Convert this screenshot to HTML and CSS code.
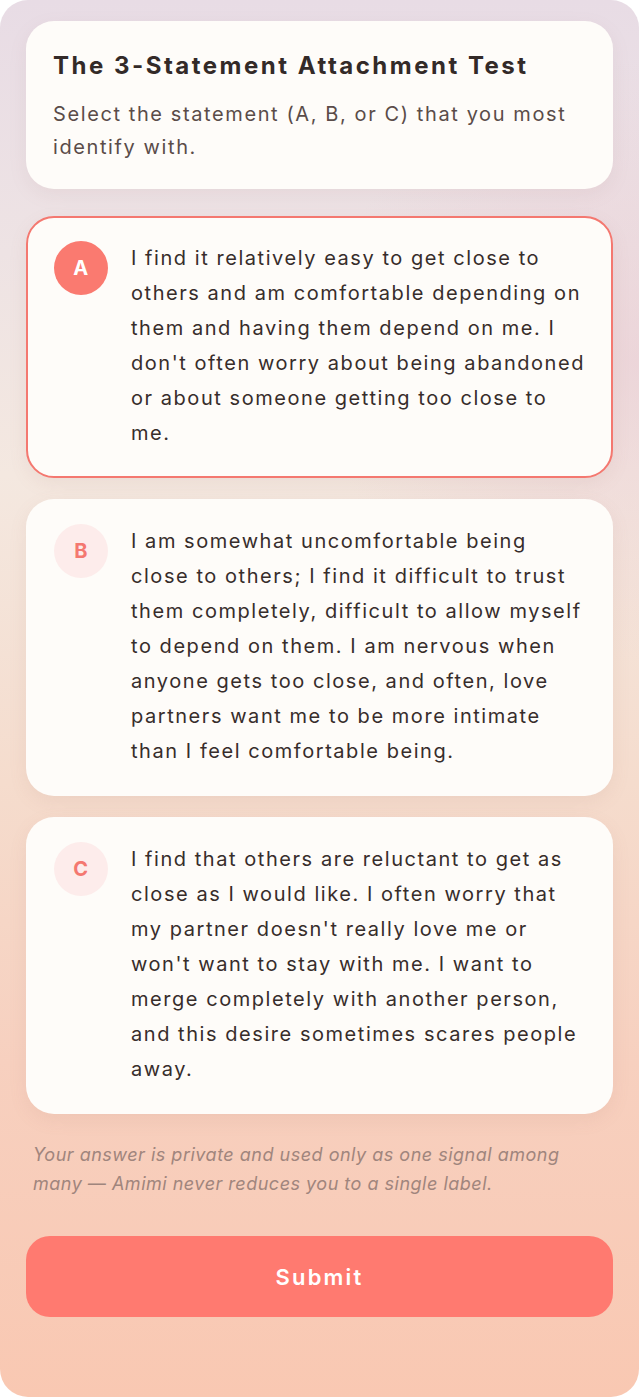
FILE: index.html
```html
<!DOCTYPE html>
<html lang="en">
<head>
<meta charset="utf-8">
<title>The 3-Statement Attachment Test</title>
<link rel="stylesheet" href="styles.css">
</head>
<body>
<main class="screen">
  <section class="intro">
    <h1 class="intro-title">The 3-Statement Attachment Test</h1>
    <p class="intro-text">Select the statement (A, B, or C) that you most identify with.</p>
  </section>

  <div class="options">
    <button class="option is-selected" type="button">
      <span class="badge">A</span>
      <span class="option-text">I find it relatively easy to get close to others and am comfortable depending on them and having them depend on me. I don't often worry about being abandoned or about someone getting too close to me.</span>
    </button>
    <button class="option" type="button">
      <span class="badge">B</span>
      <span class="option-text">I am somewhat uncomfortable being close to others; I find it difficult to trust them completely, difficult to allow myself to depend on them. I am nervous when anyone gets too close, and often, love partners want me to be more intimate than I feel comfortable being.</span>
    </button>
    <button class="option" type="button">
      <span class="badge">C</span>
      <span class="option-text">I find that others are reluctant to get as close as I would like. I often worry that my partner doesn't really love me or won't want to stay with me. I want to merge completely with another person, and this desire sometimes scares people away.</span>
    </button>
  </div>

  <p class="note">Your answer is private and used only as one signal among many — Amimi never reduces you to a single label.</p>

  <button class="submit" type="button">Submit</button>
</main>
</body>
</html>
```

FILE: styles.css
```css
* { box-sizing: border-box; }

html, body {
  margin: 0;
  padding: 0;
  background: #ffffff;
}

body {
  font-family: Inter, "Noto Sans", "Liberation Sans", sans-serif;
  color: #3a302e;
}

.screen {
  width: 639px;
  height: 1397px;
  border-radius: 28px;
  padding: 21px 26px 0 26px;
  display: flex;
  flex-direction: column;
  background:
    radial-gradient(ellipse 320px 300px at 100% 360px, rgba(232, 200, 210, 0.55), rgba(232, 200, 210, 0) 100%),
    linear-gradient(180deg, #e8dce5 0%, #eee3e4 18%, #f4e8e0 34%, #f5dccd 56%, #f7d0bf 76%, #f9c8b2 100%);
  overflow: hidden;
}

.intro {
  background: #fefcf9;
  border-radius: 28px;
  padding: 28px 27px 25px 27px;
  box-shadow: 0 6px 18px rgba(170, 130, 130, 0.10);
}

.intro-title {
  margin: 0;
  font-size: 24px;
  font-weight: 700;
  line-height: 34px;
  letter-spacing: 2.5px;
  color: #332a28;
}

.intro-text {
  margin: 15px 0 0 0;
  font-size: 20px;
  line-height: 33px;
  letter-spacing: 1.6px;
  color: #5a4c49;
}

.options {
  margin-top: 27px;
  display: flex;
  flex-direction: column;
  gap: 21px;
}

.option {
  display: flex;
  align-items: flex-start;
  gap: 23px;
  width: 100%;
  margin: 0;
  padding: 23px 26px 25px 26px;
  background: #fefcf9;
  border: 2px solid transparent;
  border-radius: 28px;
  text-align: left;
  font: inherit;
  color: inherit;
  box-shadow: 0 6px 18px rgba(170, 120, 110, 0.10);
  cursor: pointer;
}

.option.is-selected {
  border-color: #f47870;
}

.badge {
  flex: 0 0 54px;
  width: 54px;
  height: 54px;
  border-radius: 50%;
  display: flex;
  align-items: center;
  justify-content: center;
  background: #fdeceb;
  color: #f47870;
  font-size: 20px;
  font-weight: 700;
  letter-spacing: 0.5px;
}

.is-selected .badge {
  background: #fa7a70;
  color: #ffffff;
}

.option-text {
  flex: 1;
  font-size: 20px;
  line-height: 35px;
  letter-spacing: 1.55px;
  color: #372d2b;
}

.note {
  margin: 26px 7px 0 7px;
  font-size: 18px;
  line-height: 29px;
  font-style: italic;
  letter-spacing: 0.5px;
  color: #a0857d;
}

.submit {
  margin-top: 38px;
  width: 100%;
  height: 81px;
  border: none;
  border-radius: 24px;
  background: #ff7a70;
  color: #ffffff;
  font: inherit;
  font-size: 22px;
  font-weight: 600;
  letter-spacing: 2.2px;
}
```
